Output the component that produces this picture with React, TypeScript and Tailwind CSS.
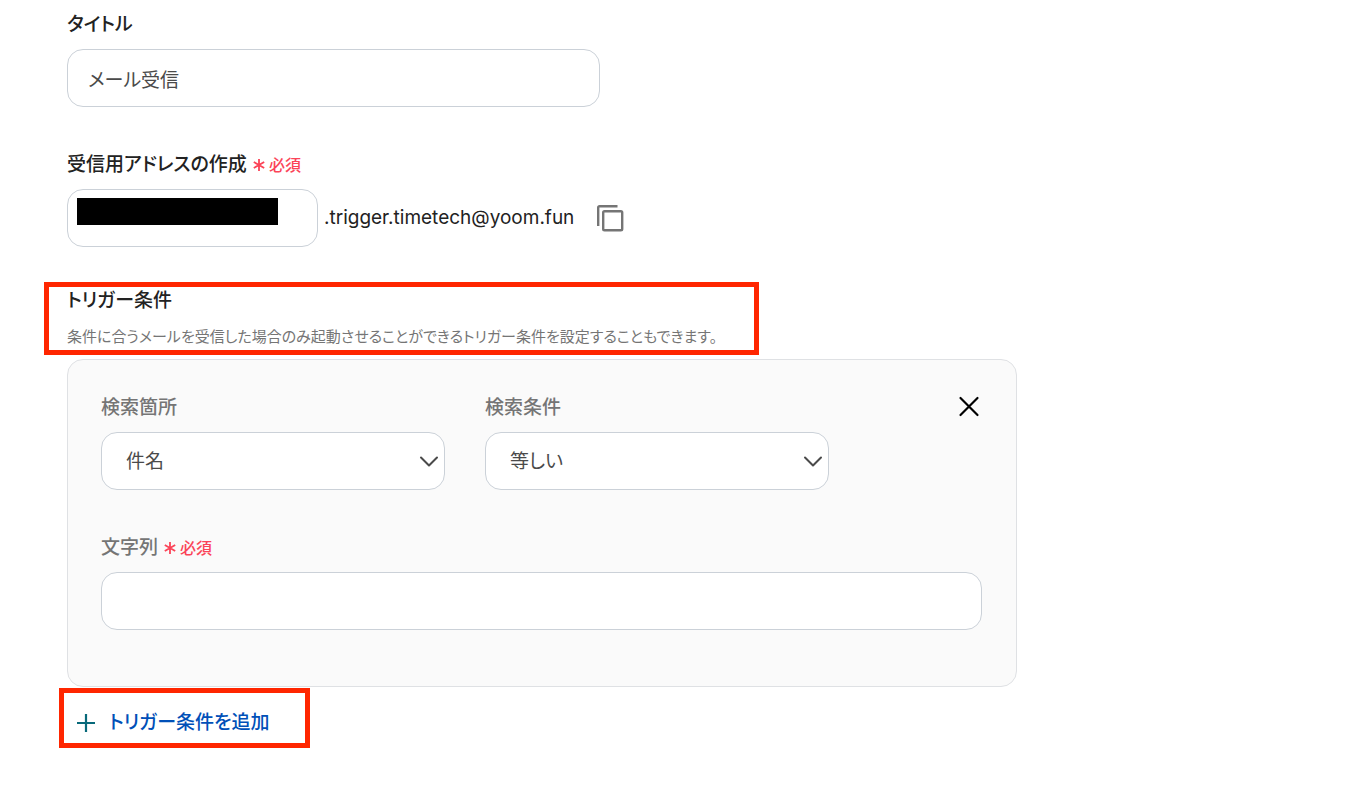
import React, { useState } from 'react';

const labelClass = 'block text-[19px] leading-7 font-medium';
const fieldClass = 'h-[58px] w-full rounded-2xl border border-[#cbd1d8] bg-white text-[19px] text-[#4a4a4a] outline-none';

function Required() {
  return (
    <span className="ml-1.5 text-[16px] leading-none font-medium text-[#fb4458]">
      <svg className="mr-1 inline h-3 w-3 align-baseline" viewBox="0 0 12 12" fill="none" stroke="currentColor" strokeWidth="1.8" aria-hidden="true">
        <path d="M6 0v12M.8 3l10.4 6M11.2 3L.8 9" />
      </svg>
      必須
    </span>
  );
}

interface SelectFieldProps {
  id: string;
  label: string;
  options: string[];
}

function SelectField({ id, label, options }: SelectFieldProps) {
  const [value, setValue] = useState(options[0]);

  return (
    <div className="w-full max-w-[344px] space-y-2.5">
      <label htmlFor={id} className={`${labelClass} text-[#757575]`}>{label}</label>
      <div className="relative">
        <select
          id={id}
          value={value}
          onChange={(e) => setValue(e.target.value)}
          className={`${fieldClass} appearance-none pt-0.5 pl-6 pr-10`}
        >
          {options.map((o) => (
            <option key={o}>{o}</option>
          ))}
        </select>
        <svg
          className="pointer-events-none absolute top-6 right-1.5 h-3 w-5"
          viewBox="0 0 20 12"
          fill="none"
          stroke="#4a4a4a"
          strokeWidth="2"
          aria-hidden="true"
        >
          <path d="M2 1.500l8 8 8-8" strokeLinecap="round" strokeLinejoin="round" />
        </svg>
      </div>
    </div>
  );
}

export default function App() {
  const [title, setTitle] = useState('メール受信');
  const [address, setAddress] = useState('demo');
  const [keyword, setKeyword] = useState('');

  return (
    <main className="min-h-screen bg-white px-[67px] py-[11px] font-['Inter','Noto_Sans_CJK_JP',sans-serif] text-[#222] [font-feature-settings:'palt']">
      <form className="max-w-[950px]" onSubmit={(e) => e.preventDefault()}>
        <div className="space-y-2.5">
          <label htmlFor="title" className={labelClass}>タイトル</label>
          <input
            id="title"
            type="text"
            value={title}
            onChange={(e) => setTitle(e.target.value)}
            className={`${fieldClass} block max-w-[533px] px-5`}
          />
        </div>

        <div className="mt-11 space-y-2.5">
          <label htmlFor="address" className={labelClass}>
            受信用アドレスの作成
            <Required />
          </label>
          <div className="flex items-center">
            <div className="relative w-[251px]">
              <input
                id="address"
                type="text"
                value={address}
                onChange={(e) => setAddress(e.target.value)}
                className={`${fieldClass} block px-5`}
              />
              {/* mask over the private part of the address */}
              <div className="absolute top-[9px] left-[10px] h-[27px] w-[201px] bg-black" />
            </div>
            <span className="ml-1.5 text-[19px]">.trigger.timetech@yoom.fun</span>
            <button type="button" aria-label="コピー" className="ml-[22px] cursor-pointer text-[#757575]">
              <svg className="h-7 w-7" viewBox="0 0 28 28" fill="none" stroke="currentColor" strokeWidth="2.4">
                <path d="M21.500 2.200H3.500a1.300 1.300 0 0 0-1.300 1.300V22" />
                <rect x="7.200" y="7.200" width="19" height="19" rx="1.300" />
              </svg>
            </button>
          </div>
        </div>

        <section className="mt-10">
          <div className="relative">
            <h2 className={labelClass}>トリガー条件</h2>
            <p className="mt-3 text-[15px] leading-5 text-[#757575]">
              条件に合うメールを受信した場合のみ起動させることができるトリガー条件を設定することもできます。
            </p>
            <div className="pointer-events-none absolute -top-[5px] -left-[23px] z-10 h-[73px] w-[715px] border-5 border-[#ff2600]" />
          </div>

          <div className="mt-3 rounded-2xl border border-[#dfe1e4] bg-[#fafafa] pt-[34px] pr-[34px] pb-14 pl-[33px]">
            <div className="flex items-start justify-between">
              <div className="flex flex-1 gap-10">
                <SelectField id="target" label="検索箇所" options={['件名', '本文', '送信元']} />
                <SelectField id="condition" label="検索条件" options={['等しい', '含む', '含まない']} />
              </div>
              <button type="button" aria-label="削除" className="cursor-pointer text-black">
                <svg className="h-7 w-7" viewBox="0 0 28 28" fill="none" stroke="currentColor" strokeWidth="2.2">
                  <path d="M6.500 4l17 17M23.500 4l-17 17" strokeLinecap="round" />
                </svg>
              </button>
            </div>

            <div className="mt-11 space-y-2.5">
              <label htmlFor="keyword" className={`${labelClass} text-[#757575]`}>
                文字列
                <Required />
              </label>
              <input
                id="keyword"
                type="text"
                value={keyword}
                onChange={(e) => setKeyword(e.target.value)}
                className={`${fieldClass} block px-5`}
              />
            </div>
          </div>

          <div className="relative mt-px h-[60px]">
            <button type="button" className="flex h-full cursor-pointer items-center gap-2.5 pt-2.5 pl-2 text-[19px] font-medium text-[#0050b8]">
              <svg className="h-6 w-6" viewBox="0 0 24 24" fill="none" stroke="#08697a" strokeWidth="2.2" aria-hidden="true">
                <path d="M11 3v18M2 12h18" />
              </svg>
              トリガー条件を追加
            </button>
            <div className="pointer-events-none absolute inset-y-0 -left-2 w-[251px] border-5 border-[#ff2600]" />
          </div>
        </section>
      </form>
    </main>
  );
}
